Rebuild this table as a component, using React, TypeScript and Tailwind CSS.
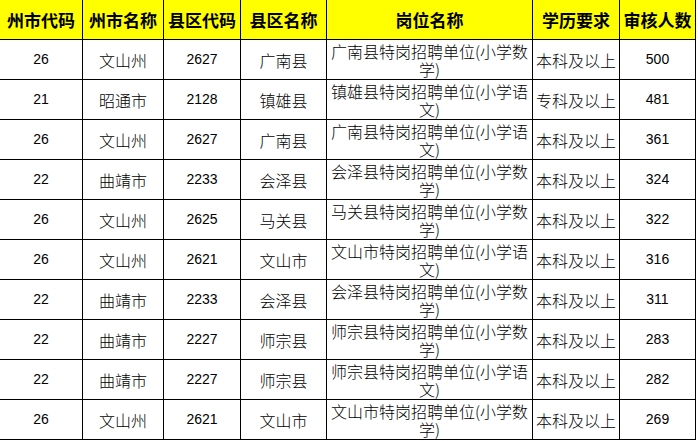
import React from 'react';

const headers = ['州市代码', '州市名称', '县区代码', '县区名称', '岗位名称', '学历要求', '审核人数'];

const rows = [
    ['26', '文山州', '2627', '广南县', '广南县特岗招聘单位(小学数学)', '本科及以上', '500'],
    ['21', '昭通市', '2128', '镇雄县', '镇雄县特岗招聘单位(小学语文)', '专科及以上', '481'],
    ['26', '文山州', '2627', '广南县', '广南县特岗招聘单位(小学语文)', '本科及以上', '361'],
    ['22', '曲靖市', '2233', '会泽县', '会泽县特岗招聘单位(小学数学)', '本科及以上', '324'],
    ['26', '文山州', '2625', '马关县', '马关县特岗招聘单位(小学数学)', '本科及以上', '322'],
    ['26', '文山州', '2621', '文山市', '文山市特岗招聘单位(小学语文)', '本科及以上', '316'],
    ['22', '曲靖市', '2233', '会泽县', '会泽县特岗招聘单位(小学数学)', '本科及以上', '311'],
    ['22', '曲靖市', '2227', '师宗县', '师宗县特岗招聘单位(小学数学)', '本科及以上', '283'],
    ['22', '曲靖市', '2227', '师宗县', '师宗县特岗招聘单位(小学语文)', '本科及以上', '282'],
    ['26', '文山州', '2621', '文山市', '文山市特岗招聘单位(小学数学)', '本科及以上', '269'],
];

// 数字列用窄一点的西文字体
const numCols = [0, 2, 6];

export default function App() {
    return (
        <div className="w-[698px] h-[441px] bg-white overflow-hidden">
            <div
                className="grid grid-cols-[83px_81px_77px_86px_206px_87px_76px] auto-rows-[40px] text-black"
                style={{ fontFamily: '"Noto Sans CJK SC", "Noto Sans", sans-serif' }}
            >
                {headers.map((h) => (
                    <div
                        key={h}
                        className="flex items-center justify-center bg-[#ffff00] border-r border-b border-black text-[17px] font-bold leading-none whitespace-nowrap"
                    >
                        {h}
                    </div>
                ))}

                {rows.map((row, i) =>
                    row.map((cell, j) => (
                        <div
                            key={`${i}-${j}`}
                            className={
                                'flex items-center justify-center text-center border-r border-b border-black ' +
                                (numCols.includes(j)
                                    ? "text-[14px] font-['Liberation_Sans',sans-serif]"
                                    : 'text-[16px] leading-[18px] font-light')
                            }
                        >
                            {cell}
                        </div>
                    ))
                )}
            </div>
        </div>
    );
}
